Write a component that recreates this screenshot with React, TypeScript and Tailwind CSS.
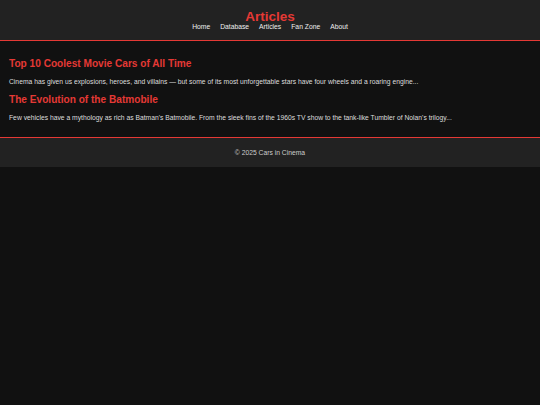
const links = ['Home', 'Database', 'Articles', 'Fan Zone', 'About'];

const articles = [
  {
    title: 'Top 10 Coolest Movie Cars of All Time',
    excerpt:
      'Cinema has given us explosions, heroes, and villains — but some of its most unforgettable stars have four wheels and a roaring engine...',
  },
  {
    title: 'The Evolution of the Batmobile',
    excerpt:
      "Few vehicles have a mythology as rich as Batman's Batmobile. From the sleek fins of the 1960s TV show to the tank-like Tumbler of Nolan's trilogy...",
  },
];

export default function App() {
  return (
    <div className="min-h-screen bg-[#111111] font-['Liberation_Sans',Arial,sans-serif]">
      {/* Header */}
      <header className="h-[41px] bg-[#222222] border-b border-[#e53935] pt-[10px] flex flex-col items-center">
        <h1 className="text-[13.5px] leading-none font-bold text-[#e53935]">Articles</h1>
        <nav className="flex gap-[10px]">
          {links.map((l) => (
            <a key={l} href="#" className="text-[6.75px] leading-none text-[#eeeeee]">
              {l}
            </a>
          ))}
        </nav>
      </header>

      {/* Articles */}
      <main className="pl-[9px] pr-[9px] pt-[18px] pb-[15px] flex flex-col">
        {articles.map((a, i) => (
          <article key={a.title} className={i > 0 ? 'mt-[9px]' : ''}>
            <h2 className="text-[10.125px] leading-none font-bold text-[#e53935]">{a.title}</h2>
            <p className="mt-[10px] text-[6.75px] leading-none text-[#dddddd]">{a.excerpt}</p>
          </article>
        ))}
      </main>

      {/* Footer */}
      <footer className="h-[30px] bg-[#222222] border-t border-[#e53935] pt-[2px] flex items-center justify-center">
        <p className="text-[6.75px] leading-none text-[#cccccc]">© 2025 Cars in Cinema</p>
      </footer>
    </div>
  );
}
